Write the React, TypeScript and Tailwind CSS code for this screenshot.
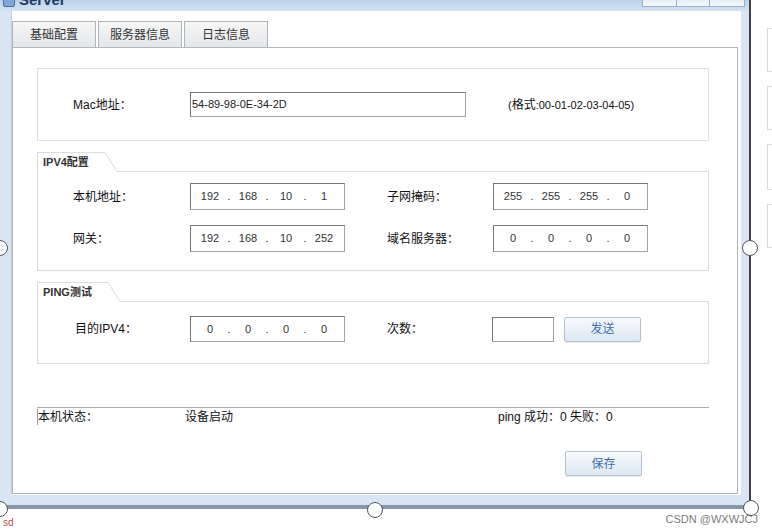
import React from 'react'

const font = "font-['Liberation_Sans','Noto_Sans_CJK_SC',sans-serif]"

const inputBorder =
  'border border-[#a3a3a3] border-t-[#767676] border-l-[#767676] bg-white'

const IpBox = ({ parts, h = 'h-[27px]' }: { parts: string[]; h?: string }) => (
  <div className={`flex ${h} w-[155px] items-center pl-[2px] text-[11px] text-[#333] ${inputBorder}`}>
    {parts.map((p, i) => (
      <React.Fragment key={i}>
        {i > 0 && <span className="w-[4px] text-center">.</span>}
        <span className="w-[34px] text-center">{p}</span>
      </React.Fragment>
    ))}
  </div>
)

const Btn = ({ label }: { label: string }) => (
  <div className="flex h-[25px] w-[77px] items-center justify-center rounded-[2px] border border-[#b3c2d3] bg-gradient-to-b from-[#f8fafd] to-[#dde7f1] text-[12px] text-[#3d6eb3] shadow-[0_1px_1px_rgba(0,0,0,0.08)]">
    {label}
  </div>
)

// group header with the slanted tab on its left
const GroupHead = ({ title, w }: { title: string; w: string }) => (
  <div className="flex h-[20px] items-stretch">
    <div className={`${w} flex items-center border-t border-l border-[#dcdcdc] pl-[5px] text-[11px] font-bold text-[#333]`}>
      {title}
    </div>
    <svg width="12" height="20" className="shrink-0">
      <line x1="0" y1="0.5" x2="12" y2="19.5" stroke="#dcdcdc" strokeWidth="1" />
    </svg>
    <div className="flex-1 border-b border-[#dcdcdc]" />
  </div>
)

const Handle = ({ pos }: { pos: string }) => (
  <div className={`absolute ${pos} h-[16px] w-[16px] rounded-full border-[1.5px] border-[#555] bg-white`} />
)

export default function App() {
  return (
    <div className={`relative flex h-[531px] w-[772px] flex-col overflow-hidden bg-white text-[12px] text-[#111] ${font}`}>
      <div className="flex">
        {/* window */}
        <div className="flex h-[509px] w-[751px] flex-col border-r-2 border-b-[4px] border-r-[#3f4248] border-b-[#8797ac] bg-[#d9e5f3]">
          {/* title bar, cut off at the top */}
          <div className="flex h-[11px] overflow-hidden bg-gradient-to-b from-[#bcd2ea] to-[#d3e2f2]">
            <div className="-mt-[12px] flex items-center gap-[4px] pl-[3px]">
              <div className="h-[14px] w-[12px] rounded-[2px] border border-[#4a6f9c] bg-[#7fa6d4]" />
              <span className="text-[15px] leading-[20px] font-bold text-[#1f3b64]">Server</span>
            </div>
            <div className="ml-auto mr-[4px] flex h-[7px]">
              <div className="w-[35px] border border-t-0 border-[#9fb0c4] bg-gradient-to-b from-[#e8eef6] to-[#f5f8fb]" />
              <div className="w-[33px] border border-t-0 border-l-0 border-[#9fb0c4] bg-gradient-to-b from-[#e8eef6] to-[#f5f8fb]" />
              <div className="w-[35px] border border-t-0 border-l-0 border-[#9fb0c4] bg-gradient-to-b from-[#e8eef6] to-[#f5f8fb]" />
            </div>
          </div>

          <div className="flex flex-1">
            <div className="w-[11px]" />
            {/* client area */}
            <div className="flex flex-1 flex-col border-l border-[#c3cfdd] bg-white pt-[10px] pr-[3px] pb-[1px]">
              {/* tabs */}
              <div className="flex h-[26px] gap-[2px]">
                {['基础配置', '服务器信息', '日志信息'].map((t) => (
                  <div
                    key={t}
                    className="flex w-[84px] items-center justify-center border border-b-0 border-[#aeb4bb] bg-gradient-to-b from-[#f6f6f6] to-[#e4e6e9] text-[12px] text-[#333]"
                  >
                    {t}
                  </div>
                ))}
              </div>

              {/* tab panel */}
              <div className="flex flex-1 flex-col border border-[#b0b6bd] pl-[24px] pr-[28px]">
                {/* mac */}
                <div className="mt-[20px] flex h-[73px] items-center border border-[#e1e1e1] pl-[35px]">
                  <span className="w-[117px]">Mac地址：</span>
                  <div className={`flex h-[25px] w-[276px] items-center pl-[1px] text-[11px] text-[#222] ${inputBorder}`}>
                    54-89-98-0E-34-2D
                  </div>
                  <span className="ml-[42px] text-[11px]">
                    (<span className="text-[12px]">格式</span>:00-01-02-03-04-05)
                  </span>
                </div>

                {/* ipv4 */}
                <div className="mt-[11px]">
                  <GroupHead title="IPV4配置" w="w-[68px]" />
                  <div className="flex h-[99px] flex-col gap-[15px] border border-t-0 border-[#dcdcdc] pt-[11px] pl-[35px]">
                    <div className="flex items-center">
                      <span className="w-[117px]">本机地址：</span>
                      <IpBox parts={['192', '168', '10', '1']} />
                      <span className="ml-[42px] w-[106px]">子网掩码：</span>
                      <IpBox parts={['255', '255', '255', '0']} />
                    </div>
                    <div className="flex items-center">
                      <span className="w-[117px]">网关：</span>
                      <IpBox parts={['192', '168', '10', '252']} />
                      <span className="ml-[42px] w-[106px]">域名服务器：</span>
                      <IpBox parts={['0', '0', '0', '0']} />
                    </div>
                  </div>
                </div>

                {/* ping */}
                <div className="mt-[11px]">
                  <GroupHead title="PING测试" w="w-[71px]" />
                  <div className="flex h-[62px] items-start border border-t-0 border-[#dcdcdc] pt-[14px] pl-[37px]">
                    <div className="flex items-center">
                      <span className="w-[115px]">目的IPV4：</span>
                      <IpBox parts={['0', '0', '0', '0']} h="h-[26px]" />
                      <span className="ml-[42px] w-[105px]">次数：</span>
                      <div className={`h-[25px] w-[62px] ${inputBorder}`} />
                      <div className="ml-[10px]">
                        <Btn label="发送" />
                      </div>
                    </div>
                  </div>
                </div>

                {/* status */}
                <div className="mt-[43px] h-px bg-[#ababab]" />
                <div className="mt-[1px] flex leading-[16px]">
                  <span className="w-[148px] border-l border-[#9a9a9a]">本机状态：</span>
                  <span className="w-[313px]">设备启动</span>
                  <span>ping 成功：0 失败：0</span>
                </div>
                <div className="mt-[26px] flex justify-end pr-[67px]">
                  <Btn label="保存" />
                </div>
              </div>
            </div>
            <div className="w-[8px]" />
          </div>
          <div className="h-[10px]" />
        </div>

        {/* faint edge of another window */}
        <div className="flex flex-col gap-[14px] pt-[28px] pl-[16px]">
          <div className="h-[44px] w-[5px] border border-r-0 border-[#dcdcdc]" />
          <div className="h-[44px] w-[5px] border border-r-0 border-[#dcdcdc]" />
          <div className="h-[46px] w-[5px] border border-r-0 border-[#dcdcdc]" />
          <div className="h-[44px] w-[5px] border border-r-0 border-[#dcdcdc]" />
        </div>
      </div>

      <div className="flex items-start">
        <span className="mt-[8px] pl-[3px] text-[10px] leading-[12px] text-[#c94a4a]">sd</span>
        <span className="ml-auto mr-[14px] mt-[3px] text-[11px] leading-[14px] text-[#7b7b7b]">CSDN @WXWJCJ</span>
      </div>

      {/* selection handles */}
      <Handle pos="left-[-8px] top-[240px]" />
      <Handle pos="left-[742px] top-[240px]" />
      <Handle pos="left-[367px] top-[502px]" />
      <Handle pos="left-[-8px] top-[501px]" />
      <Handle pos="left-[743px] top-[500px]" />
    </div>
  )
}
